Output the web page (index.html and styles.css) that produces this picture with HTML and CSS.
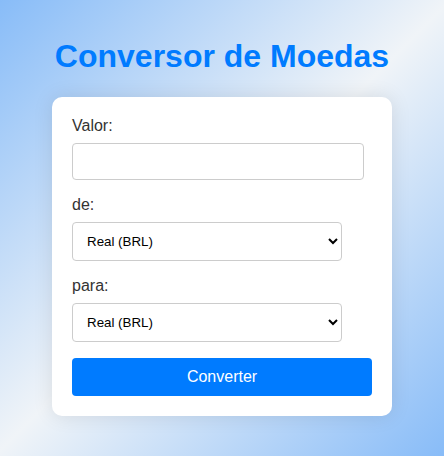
FILE: index.html
```html
<!DOCTYPE html>
<html lang="pt-BR">
<head>
<meta charset="utf-8">
<title>Conversor de Moedas</title>
<link rel="stylesheet" href="styles.css">
</head>
<body>
<h1 class="title">Conversor de Moedas</h1>
<div class="card">
  <label class="label" for="valor">Valor:</label>
  <input class="input" id="valor" type="number">
  <label class="label" for="de">de:</label>
  <select class="select" id="de">
    <option>Real (BRL)</option>
    <option>Dólar (USD)</option>
    <option>Euro (EUR)</option>
  </select>
  <label class="label" for="para">para:</label>
  <select class="select" id="para">
    <option>Real (BRL)</option>
    <option>Dólar (USD)</option>
    <option>Euro (EUR)</option>
  </select>
  <button class="button" type="button">Converter</button>
</div>
</body>
</html>
```

FILE: styles.css
```css
html, body {
  margin: 0;
  height: 100%;
}
body {
  font-family: "Liberation Sans", Arial, sans-serif;
  background: linear-gradient(135deg, #88bcf8 0%, #f0f4f8 50%, #88bcf8 100%);
  display: flex;
  flex-direction: column;
  align-items: center;
  padding-top: 17px;
  box-sizing: border-box;
}
.title {
  color: #007bff;
  font-size: 32px;
  font-weight: bold;
  margin: 21px 0 22px;
  text-align: center;
}
.card {
  width: 340px;
  box-sizing: border-box;
  background: #fff;
  padding: 20px;
  border-radius: 10px;
  box-shadow: 0 0 20px rgba(0, 0, 0, 0.1);
}
.label {
  display: block;
  color: #333;
  font-size: 16px;
  margin-bottom: 8px;
}
.input {
  display: block;
  width: 90%;
  padding: 10px;
  border: 1px solid #ccc;
  border-radius: 4px;
  font-family: "Liberation Sans", Arial, sans-serif;
  font-size: 13.33px;
  margin: 0 0 16px;
}
.select {
  display: block;
  width: 90%;
  box-sizing: border-box;
  padding: 10px;
  border: 1px solid #ccc;
  border-radius: 4px;
  background: #fff;
  color: #000;
  font-family: "Liberation Sans", Arial, sans-serif;
  font-size: 13.33px;
  margin: 0 0 16px;
}
.button {
  display: block;
  width: 100%;
  padding: 10px;
  border: none;
  border-radius: 4px;
  background: #007bff;
  color: #fff;
  font-family: "Liberation Sans", Arial, sans-serif;
  font-size: 16px;
}
```
